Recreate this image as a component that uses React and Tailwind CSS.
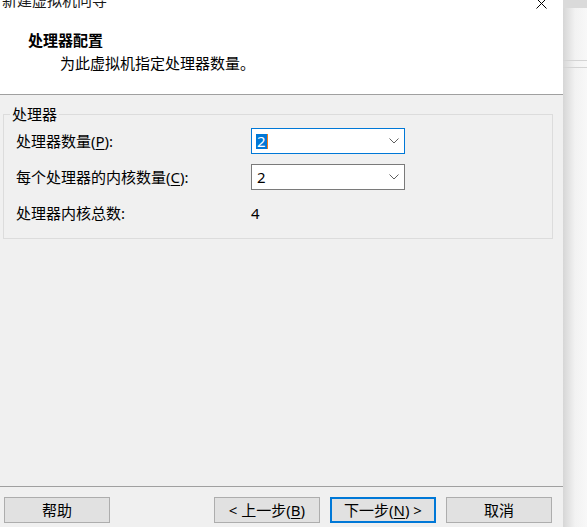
import React from "react";

// ─── Bits ──────────────────────────────────────────────────────────────────────

const FONT = { fontFamily: '"Noto Sans", "Noto Sans CJK SC", sans-serif' };

function Chevron() {
  return (
    <svg width="10" height="6" viewBox="0 0 10 6" className="shrink-0">
      <path d="M0.5 0.5 L5 5 L9.5 0.5" fill="none" stroke="#5f5f5f" strokeWidth="1" />
    </svg>
  );
}

function Combo({ value, focused }) {
  return (
    <div
      className={`h-[26px] w-[154px] bg-white border flex items-center pl-[4px] pr-[5px]
        ${focused ? "border-[#0078d7]" : "border-[#7a7a7a]"}`}
    >
      <div className="flex-1 flex items-center">
        {focused ? (
          <>
            <span className="bg-[#0078d7] text-white leading-[15px] h-[15px] px-[1px]">{value}</span>
            <span className="w-[1px] h-[15px] bg-[#f07a1a]" />
          </>
        ) : (
          <span className="px-[1px] leading-[15px]">{value}</span>
        )}
      </div>
      <Chevron />
    </div>
  );
}

function Btn({ children, primary }) {
  return (
    <button
      className={`h-[26px] w-[106px] bg-[#e1e1e1] text-black text-[15px] leading-none flex items-center justify-center
        ${primary ? "border-2 border-[#0078d7]" : "border border-[#adadad]"}`}
    >
      {children}
    </button>
  );
}

// ─── Page ──────────────────────────────────────────────────────────────────────

export default function App() {
  return (
    <div className="w-[587px] h-[527px] flex overflow-hidden bg-white text-black text-[15px]" style={FONT}>
      {/* Wizard dialog */}
      <div className="w-[563px] h-full flex flex-col">
        {/* Header */}
        <div className="h-[95px] shrink-0 bg-white border-b border-[#a0a0a0] flex flex-col">
          <div className="-mt-[10px] h-[20px] flex items-center leading-[20px]">
            <span className="pl-[2px] text-[#1a1a1a]">新建虚拟机向导</span>
            <svg width="11" height="11" viewBox="0 0 11 11" className="ml-auto mr-[16px] mt-[7px]">
              <path d="M0.5 0.5 L10.5 10.5 M10.5 0.5 L0.5 10.5" stroke="#000" strokeWidth="1" />
            </svg>
          </div>
          <div className="mt-[20px] pl-[28px] leading-[20px] font-bold">处理器配置</div>
          <div className="mt-[3px] pl-[60px] leading-[20px]">为此虚拟机指定处理器数量。</div>
        </div>

        {/* Body */}
        <div className="flex-1 bg-[#f0f0f0] pl-[3px] pr-[10px] pt-[9px]">
          <fieldset className="border border-[#dcdcdc] pl-[12px] pr-[12px] pb-[15px]">
            <legend className="-ml-[6px] px-[2px] leading-[20px]">处理器</legend>
            <div className="grid grid-cols-[235px_154px] items-center mt-[4px] gap-y-[10px]">
              <span className="leading-[20px]">
                处理器数量(<span className="underline underline-offset-2">P</span>):
              </span>
              <Combo value="2" focused />
              <span className="leading-[20px]">
                每个处理器的内核数量(<span className="underline underline-offset-2">C</span>):
              </span>
              <Combo value="2" />
              <span className="leading-[20px] mt-[3px]">处理器内核总数:</span>
              <span className="leading-[20px] mt-[3px]">4</span>
            </div>
          </fieldset>
        </div>

        {/* Footer */}
        <div className="h-[41px] shrink-0 bg-[#f0f0f0] border-t border-[#a0a0a0] flex items-start pt-[10px] pl-[4px] pr-[11px]">
          <Btn>帮助</Btn>
          <div className="ml-auto flex gap-[10px]">
            <Btn>
              &lt; 上一步(<span className="underline underline-offset-2">B</span>)
            </Btn>
            <Btn primary>
              下一步(<span className="underline underline-offset-2">N</span>) &gt;
            </Btn>
            <Btn>取消</Btn>
          </div>
        </div>
      </div>

      {/* Window behind, partly visible */}
      <div className="w-[24px] h-full flex flex-col bg-gradient-to-r from-[#d6d6d6] via-[#f2f2f2] to-[#f8f8f8]">
        <div className="h-[8px] bg-[#dadada]" />
        <div className="mt-[52px] h-[1px] bg-[#d4d4d4]" />
        <div className="mt-[6px] h-[1px] bg-[#d4d4d4]" />
      </div>
    </div>
  );
}
